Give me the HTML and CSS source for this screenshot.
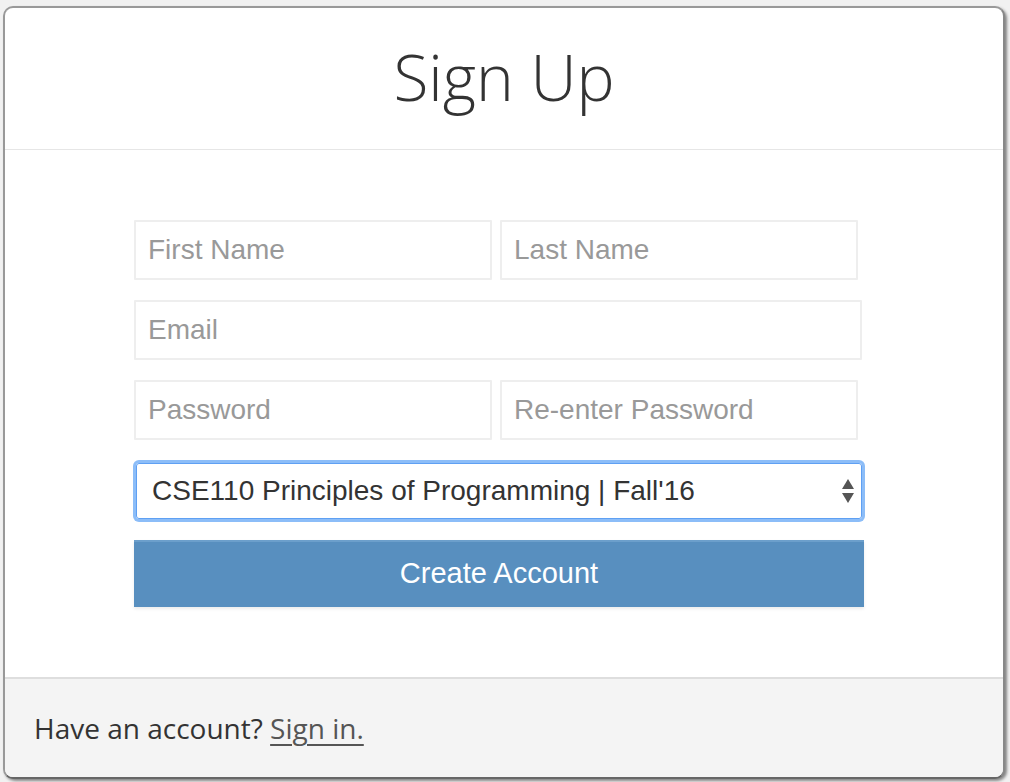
FILE: index.html
```html
<!DOCTYPE html>
<html>
<head>
<meta charset="utf-8">
<link rel="stylesheet" href="styles.css">
</head>
<body>
<div class="window">
  <header class="head">
    <h1 class="title">Sign Up</h1>
  </header>
  <main class="content">
    <form class="form">
      <div class="row">
        <input class="field half" type="text" placeholder="First Name">
        <input class="field half" type="text" placeholder="Last Name">
      </div>
      <div class="row">
        <input class="field full" type="email" placeholder="Email">
      </div>
      <div class="row">
        <input class="field half" type="password" placeholder="Password">
        <input class="field half" type="password" placeholder="Re-enter Password">
      </div>
      <div class="select-box">
        <span class="select-text">CSE110 Principles of Programming | Fall'16</span>
        <svg class="arrows" width="14" height="26" viewBox="0 0 14 26">
          <path d="M7 1 L13 11 L1 11 Z" fill="#555"/>
          <path d="M1 15 L13 15 L7 25 Z" fill="#555"/>
        </svg>
      </div>
      <button class="submit" type="button">Create Account</button>
    </form>
  </main>
  <footer class="foot">
    <p class="foot-text">Have an account? <a class="link" href="#">Sign in.</a></p>
  </footer>
</div>
</body>
</html>
```
FILE: styles.css
```css
html, body {
  margin: 0;
  padding: 0;
  background: #f1f1f1;
}
body {
  padding: 6px 5px 3px 3px;
  height: 782px;
  box-sizing: border-box;
}
.window {
  height: 773px;
  box-sizing: border-box;
  border: 2px solid #999;
  border-bottom-color: #666;
  border-right-color: #888;
  border-radius: 10px;
  background: #fff;
  overflow: hidden;
  display: flex;
  flex-direction: column;
  box-shadow: 2px 2px 3px rgba(0,0,0,0.45);
}
.head {
  height: 141px;
  border-bottom: 1px solid #e6e6e6;
  display: flex;
  align-items: center;
  justify-content: center;
}
.title {
  margin: 0;
  font-family: "Open Sans", sans-serif;
  font-weight: 300;
  font-size: 64px;
  color: #333;
  line-height: 1;
  padding-bottom: 4px;
}
.content {
  flex: 1;
  padding: 70px 0 0 129px;
}
.form {
  width: 730px;
  display: flex;
  flex-direction: column;
}
.row {
  display: flex;
  gap: 8px;
  margin-bottom: 20px;
}
.field {
  height: 60px;
  box-sizing: border-box;
  border: 2px solid #eee;
  border-radius: 1px;
  padding: 0 12px;
  font-family: "Liberation Sans", Arial, sans-serif;
  font-size: 28px;
  color: #333;
  background: #fff;
  outline: none;
}
.field::placeholder {
  color: #999;
}
.half {
  width: 358px;
}
.full {
  width: 728px;
}
.select-box {
  margin-top: 3px;
  margin-left: 2px;
  width: 726px;
  height: 56px;
  box-sizing: border-box;
  border: 1px solid #5fa0f3;
  border-radius: 3px;
  box-shadow: 0 0 0 3px #8cbdf8;
  display: flex;
  align-items: center;
  justify-content: space-between;
  padding: 0 6px 0 15px;
}
.select-text {
  font-family: "Liberation Sans", Arial, sans-serif;
  font-size: 28px;
  color: #333;
}
.arrows {
  display: block;
}
.submit {
  margin-top: 21px;
  height: 67px;
  border: none;
  border-top: 2px solid #6c9fcb;
  background: #588fbf;
  color: #fff;
  font-family: "Liberation Sans", Arial, sans-serif;
  font-size: 29px;
  padding: 0 0 2px;
  box-shadow: 0 2px 3px rgba(0,0,0,0.08);
}
.foot {
  height: 98px;
  border-top: 2px solid #dedede;
  background: #f4f4f4;
  display: flex;
  align-items: center;
  padding-left: 29px;
}
.foot-text {
  margin: 0;
  font-family: "Open Sans", sans-serif;
  font-size: 28px;
  color: #333;
}
.link {
  color: #555;
  text-decoration: underline;
  text-underline-offset: 5px;
  text-decoration-thickness: 2px;
}
```
